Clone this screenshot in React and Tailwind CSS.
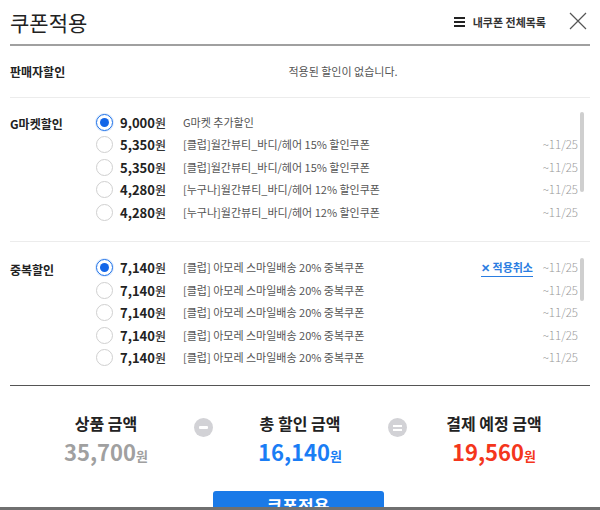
import React from "react";

const FONT = { fontFamily: '"Noto Sans CJK KR", "Noto Sans", sans-serif' };

const gmarket = [
  { amount: "9,000", desc: "G마켓 추가할인", date: "", checked: true },
  { amount: "5,350", desc: "[클럽]월간뷰티_바디/헤어 15% 할인쿠폰", date: "~11/25" },
  { amount: "5,350", desc: "[클럽]월간뷰티_바디/헤어 15% 할인쿠폰", date: "~11/25" },
  { amount: "4,280", desc: "[누구나]월간뷰티_바디/헤어 12% 할인쿠폰", date: "~11/25" },
  { amount: "4,280", desc: "[누구나]월간뷰티_바디/헤어 12% 할인쿠폰", date: "~11/25" },
];

const dup = [
  { amount: "7,140", desc: "[클럽] 아모레 스마일배송 20% 중복쿠폰", date: "~11/25", checked: true, cancel: true },
  { amount: "7,140", desc: "[클럽] 아모레 스마일배송 20% 중복쿠폰", date: "~11/25" },
  { amount: "7,140", desc: "[클럽] 아모레 스마일배송 20% 중복쿠폰", date: "~11/25" },
  { amount: "7,140", desc: "[클럽] 아모레 스마일배송 20% 중복쿠폰", date: "~11/25" },
  { amount: "7,140", desc: "[클럽] 아모레 스마일배송 20% 중복쿠폰", date: "~11/25" },
];

function Radio({ checked }) {
  return checked ? (
    <span className="w-[17px] h-[17px] rounded-full border-[1.5px] border-[#1a6fe8] flex items-center justify-center shadow-[0_0_0_1px_rgba(26,111,232,0.15)]">
      <span className="w-[9px] h-[9px] rounded-full bg-[#1366e8]" />
    </span>
  ) : (
    <span className="w-[17px] h-[17px] rounded-full border border-[#d0d0d0] bg-white" />
  );
}

function CouponRow({ row }) {
  return (
    <div className="h-[22.5px] flex items-center">
      <Radio checked={row.checked} />
      <div className="w-[63px] ml-[7px] text-[13px] text-[#222] font-bold leading-none">
        {row.amount}
        <span className="text-[12px] font-medium text-[#333]">원</span>
      </div>
      <div className="flex-1 text-[11px] text-[#555] leading-none">{row.desc}</div>
      {row.cancel && (
        <div className="mr-[5px] text-[11px] font-bold text-[#2a7de1] leading-none pb-[3px] border-b border-[#2a7de1] mt-[4px]">
          ✕ 적용취소
        </div>
      )}
      <div className="w-[40px] text-right text-[11.5px] text-[#9a9a9a] font-light leading-none">{row.date}</div>
    </div>
  );
}

function Section({ label, rows, thumb }) {
  return (
    <div className="flex">
      <div className="w-[86px] pt-[4px] text-[12px] font-bold text-[#222]">{label}</div>
      <div className="flex-1">
        {rows.map((r, i) => (
          <CouponRow key={i} row={r} />
        ))}
      </div>
      <div className="w-[4px] ml-[2px] mr-[6px]">
        <div className={`w-[4px] ${thumb} rounded-full bg-[#cfcfcf] mt-[1px]`} />
      </div>
    </div>
  );
}

export default function App() {
  return (
    <div className="w-[600px] h-[510px] overflow-hidden bg-white relative" style={FONT}>
      {/* header */}
      <div className="mx-[10px] h-[46px] border-b-2 border-[#a0a0a0] flex items-center">
        <div className="flex-1 text-[21px] text-[#222] pt-[2px]">쿠폰적용</div>
        <svg width="11" height="10" viewBox="0 0 11 10" className="mr-[8px]">
          <rect x="0" y="0" width="11" height="2" fill="#222" />
          <rect x="0" y="4" width="11" height="2" fill="#222" />
          <rect x="0" y="8" width="11" height="2" fill="#222" />
        </svg>
        <div className="text-[11px] font-bold text-[#333] mr-[23px]">내쿠폰 전체목록</div>
        <svg width="18" height="18" viewBox="0 0 18 18" className="mr-[3px] mb-[2px]">
          <path d="M1 1 L17 17 M17 1 L1 17" stroke="#555" strokeWidth="1.2" />
        </svg>
      </div>

      {/* seller */}
      <div className="mx-[10px] h-[52px] flex items-center border-b border-[#ececec]">
        <div className="w-[86px] text-[12px] font-bold text-[#222]">판매자할인</div>
        <div className="flex-1 text-center text-[11px] text-[#555]">적용된 할인이 없습니다.</div>
      </div>

      <div className="mx-[10px] pt-[13px] pb-[17px] border-b border-[#ececec]">
        <Section label="G마켓할인" rows={gmarket} thumb="h-[80px]" />
      </div>

      <div className="mx-[10px] pt-[15px] pb-[16px] border-b border-[#555]">
        <Section label="중복할인" rows={dup} thumb="h-[43px]" />
      </div>

      {/* summary */}
      <div className="flex justify-center pt-[26px]">
        <div className="w-[150px] flex flex-col items-center">
          <div className="text-[16px] font-bold text-[#222] leading-[22px]">상품 금액</div>
          <div className="text-[22px] font-bold text-[#a0a0a0] leading-[30px] mt-[2px]">
            35,700<span className="text-[13px]">원</span>
          </div>
        </div>
        <div className="w-[44px] flex justify-center pt-[6px]">
          <div className="w-[19px] h-[19px] rounded-full bg-[#d2d2d6] flex items-center justify-center">
            <div className="w-[9px] h-[3px] bg-white rounded-[1px]" />
          </div>
        </div>
        <div className="w-[150px] flex flex-col items-center">
          <div className="text-[16px] font-bold text-[#222] leading-[22px]">총 할인 금액</div>
          <div className="text-[22px] font-bold text-[#1a7df5] leading-[30px] mt-[2px]">
            16,140<span className="text-[13px]">원</span>
          </div>
        </div>
        <div className="w-[44px] flex justify-center pt-[6px]">
          <div className="w-[19px] h-[19px] rounded-full bg-[#d2d2d6] flex flex-col items-center justify-center gap-[2px]">
            <div className="w-[9px] h-[2px] bg-white" />
            <div className="w-[9px] h-[2px] bg-white" />
          </div>
        </div>
        <div className="w-[150px] flex flex-col items-center">
          <div className="text-[16px] font-bold text-[#222] leading-[22px]">결제 예정 금액</div>
          <div className="text-[22px] font-bold text-[#f4361c] leading-[30px] mt-[2px]">
            19,560<span className="text-[13px]">원</span>
          </div>
        </div>
      </div>

      <div className="flex justify-center pt-[20px] pr-[4px]">
        <button className="w-[171px] h-[44px] rounded-t-[3px] bg-[#1a7ae8] text-white text-[17px] font-bold flex items-start justify-center pt-[4px] leading-[22px]">
          쿠폰적용
        </button>
      </div>

      <div className="absolute left-0 right-0 bottom-0 h-[3px] bg-[#707070]" />
    </div>
  );
}
